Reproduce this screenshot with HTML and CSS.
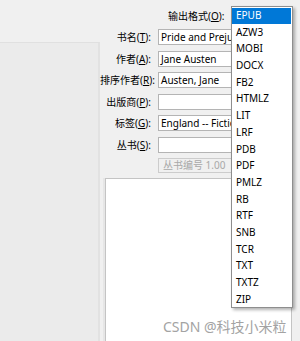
FILE: index.html
```html
<!DOCTYPE html>
<html>
<head>
  <meta charset="utf-8">
  <link rel="stylesheet" href="styles.css">
</head>
<body>
  <div class="header">
    <span class="format-label">输出格式(<u>O</u>):</span>
  </div>

  <div class="content">
    <div class="side"></div>

    <div class="form-col">
      <div class="form">
        <label>书名(<u>T</u>):</label>
        <div class="field">Pride and Prejudice</div>

        <label>作者(<u>A</u>):</label>
        <div class="field">Jane Austen</div>

        <label>排序作者(<u>R</u>):</label>
        <div class="field">Austen, Jane</div>

        <label>出版商(<u>P</u>):</label>
        <div class="field"></div>

        <label>标签(<u>G</u>):</label>
        <div class="field">England -- Fiction</div>

        <label>丛书(<u>S</u>):</label>
        <div class="field"></div>

        <span></span>
        <div class="spin">丛书编号 1.00</div>
      </div>

      <div class="comments"></div>
    </div>
  </div>

  <ul class="dropdown">
    <li class="selected">EPUB</li>
    <li>AZW3</li>
    <li>MOBI</li>
    <li>DOCX</li>
    <li>FB2</li>
    <li>HTMLZ</li>
    <li>LIT</li>
    <li>LRF</li>
    <li>PDB</li>
    <li>PDF</li>
    <li>PMLZ</li>
    <li>RB</li>
    <li>RTF</li>
    <li>SNB</li>
    <li>TCR</li>
    <li>TXT</li>
    <li>TXTZ</li>
    <li>ZIP</li>
  </ul>

  <div class="watermark">CSDN @科技小米粒</div>
</body>
</html>
```

FILE: styles.css
```css
body {
  margin: 0;
  width: 300px;
  height: 341px;
  overflow: hidden;
  position: relative;
  background-color: #f0f0f0;
  font-family: "Noto Sans", "Noto Sans CJK SC", sans-serif;
  font-size: 10px;
  color: #000;
}

.header {
  height: 29px;
  box-sizing: border-box;
  padding: 8px 0 0 168px;
  line-height: 16px;
}

.content {
  display: flex;
  height: 312px;
}

.side {
  width: 100px;
  margin-top: 13px;
  box-sizing: border-box;
  background-color: #ebebeb;
  border-top: 1px solid #e0e0e0;
  border-right: 2px solid #e2e2e2;
}

.form-col {
  flex: 1;
}

.form {
  display: grid;
  grid-template-columns: 51px 73px;
  grid-auto-rows: 16px;
  column-gap: 7px;
  row-gap: 5.5px;
}

.form label {
  text-align: right;
  white-space: nowrap;
  line-height: 16px;
}

.field {
  box-sizing: border-box;
  background-color: #fff;
  border: 1px solid #b4b4b4;
  border-right: none;
  padding-left: 2px;
  line-height: 14px;
  white-space: nowrap;
  overflow: hidden;
}

.spin {
  box-sizing: border-box;
  height: 15px;
  border: 1px solid #cccccc;
  border-right: none;
  background-color: #f0f0f0;
  color: #a8a8a8;
  padding-left: 4px;
  line-height: 13px;
  white-space: nowrap;
  overflow: hidden;
}

.comments {
  margin: 4px 0 0 5px;
  width: 187px;
  height: 170px;
  box-sizing: border-box;
  background-color: #fff;
  border: 1px solid #c4c4c4;
  box-shadow: -2px 0 0 #e6e6e6;
}

.dropdown {
  position: absolute;
  left: 231px;
  top: 6px;
  width: 62px;
  margin: 0;
  padding: 0;
  list-style: none;
  box-sizing: border-box;
  background-color: #fff;
  border: 1px solid #8e8e8e;
  box-shadow: 2px 2px 3px rgba(0, 0, 0, 0.3);
}

.dropdown li {
  height: 16.7px;
  line-height: 16.7px;
  padding-left: 4px;
}

.dropdown li.selected {
  background-color: #0078d7;
  color: white;
  margin: 1px 1px 0 0;
  height: 15.7px;
  line-height: 15.7px;
}

.watermark {
  position: absolute;
  left: 163px;
  top: 317px;
  font-size: 14px;
  color: #a3a3a3;
  line-height: 20px;
  white-space: nowrap;
}
```
